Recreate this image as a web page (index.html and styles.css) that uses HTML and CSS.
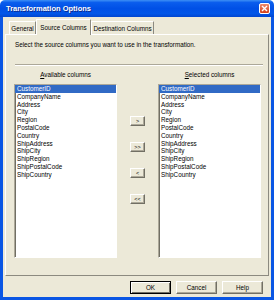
FILE: index.html
```html
<!DOCTYPE html>
<html lang="en">
<head>
  <meta charset="UTF-8" />
  <title>Transformation Options</title>
  <link rel="stylesheet" href="styles.css">
</head>
<body>
  <div class="window">
    <div class="titlebar">
      <span class="title">Transformation Options</span>
      <span class="close">
        <svg width="7" height="7" viewBox="0 0 7 7"><path d="M1 1 L6 6 M6 1 L1 6" stroke="#fff" stroke-width="1.4" /></svg>
      </span>
    </div>

    <div class="frame">
      <div class="tabs">
        <div class="tab tab-general">General</div>
        <div class="tab tab-source active">Source Columns</div>
        <div class="tab tab-dest">Destination Columns</div>
      </div>

      <div class="panel">
        <p class="hint">Select the source columns you want to use in the transformation.</p>
        <div class="rule"></div>

        <div class="pickers">
          <div class="picker">
            <div class="picker-label"><u>A</u>vailable columns</div>
            <ul class="listbox">
              <li class="selected">CustomerID</li>
              <li>CompanyName</li>
              <li>Address</li>
              <li>City</li>
              <li>Region</li>
              <li>PostalCode</li>
              <li>Country</li>
              <li>ShipAddress</li>
              <li>ShipCity</li>
              <li>ShipRegion</li>
              <li>ShipPostalCode</li>
              <li>ShipCountry</li>
            </ul>
          </div>

          <div class="movers">
            <button class="mover">&gt;</button>
            <button class="mover">&gt;&gt;</button>
            <button class="mover">&lt;</button>
            <button class="mover">&lt;&lt;</button>
          </div>

          <div class="picker">
            <div class="picker-label"><u>S</u>elected columns</div>
            <ul class="listbox">
              <li class="selected">CustomerID</li>
              <li>CompanyName</li>
              <li>Address</li>
              <li>City</li>
              <li>Region</li>
              <li>PostalCode</li>
              <li>Country</li>
              <li>ShipAddress</li>
              <li>ShipCity</li>
              <li>ShipRegion</li>
              <li>ShipPostalCode</li>
              <li>ShipCountry</li>
            </ul>
          </div>
        </div>
      </div>

      <div class="footer">
        <button class="btn default">OK</button>
        <button class="btn">Cancel</button>
        <button class="btn">Help</button>
      </div>
    </div>
  </div>
</body>
</html>
```

FILE: styles.css
```css
:root {
  --face: #ece9d8;
  --shadow: #8c8a80;
  --dark: #716f64;
  --mid: #aca899;
  --xp-blue: #0a56e4;
  --select: #316ac5;
}

body {
  margin: 0;
  background: #fff;
}

.window {
  width: 274px;
  height: 300px;
  display: flex;
  flex-direction: column;
  font-family: "Liberation Sans", Arial, sans-serif;
  font-size: 6.3px;
  color: #000;
}

/* title bar */
.titlebar {
  height: 17px;
  flex: none;
  box-sizing: border-box;
  padding: 0 4px 0 6px;
  display: flex;
  align-items: center;
  justify-content: space-between;
  border-radius: 5px 5px 0 0;
  background: linear-gradient(180deg, #3d8ff5 0%, #0a5ded 15%, #0050e6 50%, #0156e8 80%, #0146cf 100%);
}

.title {
  color: #fff;
  font-weight: bold;
  font-size: 7.5px;
  text-shadow: 1px 1px 0 #0f2a8c;
}

.close {
  width: 11px;
  height: 11px;
  box-sizing: border-box;
  border: 1px solid #fff;
  border-radius: 2px;
  background: linear-gradient(#ec8b6c, #d4401b);
  display: flex;
  align-items: center;
  justify-content: center;
}

.close svg {
  display: block;
}

/* dialog body */
.frame {
  flex: 1;
  background: var(--face);
  border: 3px solid var(--xp-blue);
  border-top: 0;
  padding: 2px 2px 0;
  display: flex;
  flex-direction: column;
}

.tabs {
  height: 15px;
  padding-left: 4px;
  display: flex;
  align-items: flex-end;
}

.tab {
  height: 13px;
  box-sizing: border-box;
  border: 1px solid;
  border-color: #fff var(--shadow) transparent #fff;
  border-bottom: 0;
  background: var(--face);
  display: flex;
  align-items: center;
  justify-content: center;
  white-space: nowrap;
}

.tab-general { width: 27px; }
.tab-source { width: 55px; }
.tab-dest { width: 63px; }

.tab.active {
  height: 16px;
  margin-bottom: -1px;
  position: relative;
  z-index: 1;
  padding-bottom: 1px;
}

.panel {
  height: 242px;
  box-sizing: border-box;
  border: 1px solid;
  border-color: #fff var(--shadow) var(--shadow) #fff;
  padding: 6px 7px 0 8px;
  display: flex;
  flex-direction: column;
}

.hint {
  margin: 0 0 0 1px;
  line-height: 8px;
  white-space: nowrap;
}

.rule {
  margin: 15px -2px 0 1px;
  border-top: 1px solid var(--mid);
  border-bottom: 1px solid #fff;
}

.pickers {
  display: flex;
  margin-top: 5px;
}

.picker {
  width: 103px;
  display: flex;
  flex-direction: column;
}

.picker-label {
  text-align: center;
  line-height: 8px;
  margin-bottom: 5px;
}

.listbox {
  height: 174px;
  box-sizing: border-box;
  margin: 0;
  padding: 0;
  list-style: none;
  background: #fff;
  border: 1px solid;
  border-color: var(--mid) #fff #fff var(--mid);
  box-shadow: inset 1px 1px 0 var(--dark);
}

.listbox li {
  line-height: 7.8px;
  padding-left: 2px;
  white-space: nowrap;
}

.listbox li.selected {
  background: var(--select);
  color: #fff;
}

.movers {
  width: 41px;
  padding-top: 45px;
  display: flex;
  flex-direction: column;
  align-items: center;
  gap: 16px;
}

.mover,
.btn {
  box-sizing: border-box;
  padding: 0;
  margin: 0;
  border: 1px solid;
  border-color: #fff var(--dark) var(--dark) #fff;
  box-shadow: inset -1px -1px 0 var(--mid);
  background: var(--face);
  font-family: inherit;
  color: #000;
  display: flex;
  align-items: center;
  justify-content: center;
}

.mover {
  width: 15px;
  height: 10px;
  font-size: 5.5px;
}

.footer {
  height: 21px;
  box-sizing: border-box;
  padding: 5px 6px 0 0;
  display: flex;
  justify-content: flex-end;
  gap: 5px;
}

.btn {
  width: 41px;
  height: 13px;
  font-size: 6.3px;
}

.btn.default {
  border-color: #000;
  box-shadow: inset 1px 1px 0 #fff, inset -1px -1px 0 var(--dark);
}
```
